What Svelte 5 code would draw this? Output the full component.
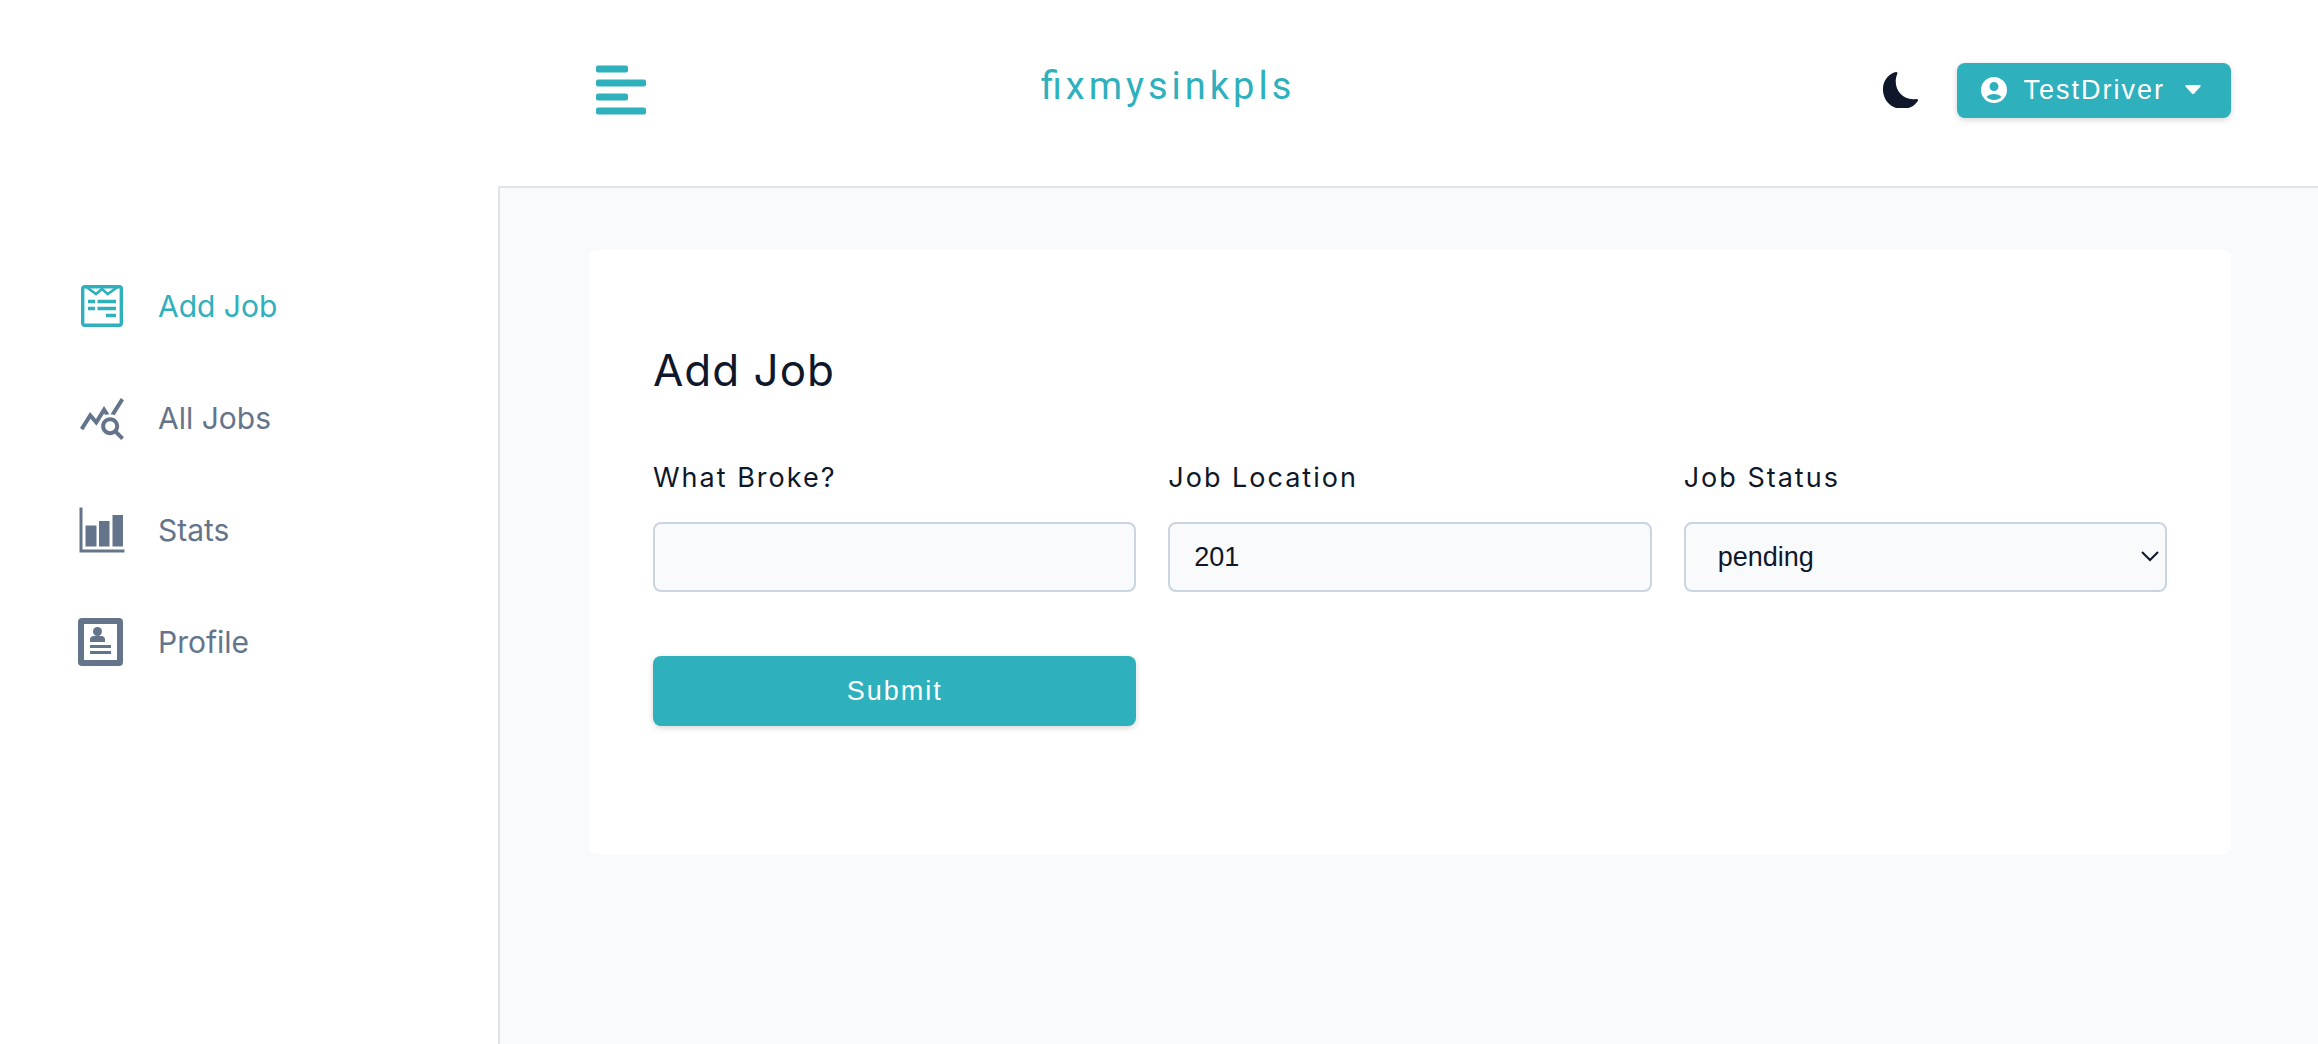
<script>
  const links = [
    { label: 'Add Job', icon: 'form', active: true },
    { label: 'All Jobs', icon: 'query' },
    { label: 'Stats', icon: 'bars' },
    { label: 'Profile', icon: 'profile' }
  ];
  let broke = $state('');
  let location = $state('201');
  let status = $state('pending');
</script>

<div class="layout">
  <aside class="sidebar">
    <nav>
      {#each links as link}
        <a href="#{link.icon}" class:active={link.active}>
          <svg viewBox="0 0 48 48" fill="currentColor" aria-hidden="true">
            {#if link.icon === 'form'}
              <g fill="none" stroke="currentColor" stroke-width="3.4">
                <rect x="4.7" y="4.7" width="38.6" height="38.6" rx="2" />
                <path d="M7 4l11 8 6-5 5.700 5L41 4" stroke-width="2.600" />
                <path d="M10 19.500h7M19.500 19.500H38M10 26.500h7M19.500 26.500H38M28 33.500h10" />
              </g>
            {:else if link.icon === 'query'}
              <path transform="scale(2)" d="M19.88 18.47c.44-.7.7-1.51.7-2.39 0-2.49-2.01-4.5-4.5-4.5s-4.5 2.010-4.500 4.500 2.010 4.500 4.490 4.500c.88 0 1.700-.26 2.390-.7L21.580 23 23 21.580l-3.120-3.110zm-3.800.11a2.500 2.500 0 0 1 0-5 2.500 2.500 0 0 1 0 5zm-.36-8.500c-.74.020-1.450.18-2.100.45l-.55-.83-3.800 6.180-3.010-3.520-3.630 5.810L1 17l5-8 3 3.500L13 6l2.720 4.080zm2.590.5c-.64-.28-1.330-.45-2.050-.49L21.380 2 23 3.180l-4.670 7.400z" />
            {:else if link.icon === 'bars'}
              <path d="M1.500 1.500h3v42h42v3h-45zM7.500 19.500h11v21h-11zM21 15h10.500v25.500H21zM34.500 9H45v31.500H34.500z" />
            {:else}
              <path fill-rule="evenodd" d="M4 0h37a4 4 0 0 1 4 4v40a4 4 0 0 1-4 4H4a4 4 0 0 1-4-4V4a4 4 0 0 1 4-4zM6 6v36h33V6z" />
              <circle cx="19.500" cy="13.500" r="4.500" />
              <path d="M12 24v-2.500q0-3.500 4-3.500h7q4 0 4 3.500V24zM12 27h21v3H12zM12 33h21v3H12z" />
            {/if}
          </svg>
          {link.label}
        </a>
      {/each}
    </nav>
  </aside>

  <div class="page">
    <header>
      <button type="button" class="icon-btn" aria-label="Toggle sidebar">
        <svg width="50" height="50" viewBox="0 0 50 50" fill="currentColor" aria-hidden="true">
          <rect y=".5" width="32" height="7" rx="2" /><rect y="14.5" width="50" height="7" rx="2" />
          <rect y="28.5" width="32" height="7" rx="2" /><rect y="42.5" width="50" height="7" rx="2" />
        </svg>
      </button>
      <span class="brand">fixmysinkpls</span>
      <div class="tools">
        <button type="button" class="icon-btn theme" aria-label="Toggle theme">
          <svg width="36" height="36" viewBox="0 0 36 36" fill="currentColor" aria-hidden="true">
            <path d="M13 0Q15 0 14.200 2C9 15 18 29 33 27Q36 27 34.500 29.500C32 33 29 35 25.500 36H13C-3 31-5 7 11 .5Z" />
          </svg>
        </button>
        <button type="button" class="btn user">
          <svg width="26" height="26" viewBox="0 0 26 26" fill="currentColor" aria-hidden="true">
            <path fill-rule="evenodd" d="M13 0a13 13 0 1 0 0 26 13 13 0 1 0 0-26zM13 5a4.500 4.500 0 1 1 0 9 4.500 4.500 0 1 1 0-9zM5.500 20c3-4 12-4 15 0-4 4-11 4-15 0z" />
          </svg>
          TestDriver
          <svg class="caret" width="16" height="10" viewBox="0 0 16 10" fill="currentColor" aria-hidden="true">
            <path d="M1.500 0h13q2 0 .8 1.800L9.200 8.500q-1.200 1-2.400 0L.7 1.800Q-.5 0 1.500 0z" />
          </svg>
        </button>
      </div>
    </header>

    <main>
      <form onsubmit={(e) => e.preventDefault()}>
        <h1>Add Job</h1>
        <div class="fields">
          <div class="field">
            <label for="broke">What Broke?</label>
            <input id="broke" type="text" bind:value={broke} />
          </div>
          <div class="field">
            <label for="location">Job Location</label>
            <input id="location" type="text" bind:value={location} />
          </div>
          <div class="field">
            <label for="status">Job Status</label>
            <div class="select-wrap">
              <select id="status" bind:value={status}>
                <option>pending</option>
                <option>in progress</option>
                <option>fixed</option>
              </select>
              <svg width="18" height="12" viewBox="0 0 18 12" fill="none" stroke="currentColor" stroke-width="2" aria-hidden="true">
                <path d="M1 1l8 8 8-8" />
              </svg>
            </div>
          </div>
          <button type="submit" class="btn submit">Submit</button>
        </div>
      </form>
    </main>
  </div>
</div>

<style>
  :global(body) {
    margin: 0;
  }
  .layout {
    --teal: #2eb0bd;
    --ink: #0f172a;
    --line: #e1e3e6;
    display: grid;
    grid-template-columns: 498px 1fr;
    min-height: 100vh;
    background: #fff;
    color: var(--ink);
    font-family: Inter, sans-serif;
  }
  .layout *,
  .layout {
    box-sizing: border-box;
  }
  svg {
    display: block;
    flex: none;
  }
  nav {
    display: flex;
    flex-direction: column;
    padding-top: 250px;
  }
  nav a {
    display: flex;
    align-items: center;
    gap: 32px;
    height: 112px;
    padding-left: 78px;
    color: #64748b;
    font-size: 30px;
    text-decoration: none;
  }
  nav a.active {
    color: var(--teal);
  }
  nav svg {
    width: 48px;
    height: 48px;
  }
  .page {
    display: flex;
    flex-direction: column;
  }
  header {
    display: flex;
    align-items: center;
    justify-content: space-between;
    height: 188px;
    padding: 0 87px 6px 91px;
    border-bottom: 2px solid var(--line);
  }
  button {
    border: 0;
    cursor: pointer;
    font-family: "Liberation Sans", sans-serif;
  }
  .icon-btn {
    padding: 0 7px;
    background: none;
    color: var(--teal);
  }
  .icon-btn.theme {
    padding: 0;
    color: var(--ink);
  }
  .brand {
    padding-bottom: 8px;
    color: var(--teal);
    font-family: Roboto, sans-serif;
    font-size: 38px;
    letter-spacing: 4px;
    font-feature-settings: "liga" 1;
  }
  .tools {
    display: flex;
    align-items: center;
    justify-content: flex-end;
    gap: 38px;
    min-width: 548px;
  }
  .btn {
    border-radius: 8px;
    background: var(--teal);
    box-shadow: 0 2px 6px rgb(0 0 0 / 16%);
    color: #fff;
    font-size: 27px;
    letter-spacing: 2px;
  }
  .user {
    display: flex;
    align-items: center;
    gap: 16px;
    height: 55px;
    padding: 0 30px 0 24px;
  }
  .caret {
    margin-left: 4px;
  }
  main {
    flex: 1;
    padding: 62px 87px 62px 89px;
    border-left: 2px solid var(--line);
    background: #f8fafc;
  }
  form {
    padding: 96px 64px 128px;
    border-radius: 8px;
    background: #fff;
  }
  h1 {
    margin: 0 0 64px;
    font-size: 44px;
    font-weight: 400;
    line-height: 48px;
    letter-spacing: 1px;
  }
  .fields {
    display: grid;
    grid-template-columns: repeat(3, 1fr);
    gap: 64px 32px;
  }
  label {
    display: block;
    margin-bottom: 24px;
    font-size: 27px;
    line-height: 40px;
    letter-spacing: 2px;
  }
  input,
  select {
    display: block;
    width: 100%;
    height: 70px;
    padding: 0 24px;
    border: 2px solid #cbd5e1;
    border-radius: 8px;
    background: #f8fafc;
    color: var(--ink);
    font-family: "Liberation Sans", sans-serif;
    font-size: 27px;
  }
  select {
    appearance: none;
    padding: 0 32px;
  }
  .select-wrap {
    display: grid;
    align-items: center;
  }
  .select-wrap > * {
    grid-area: 1 / 1;
  }
  .select-wrap svg {
    justify-self: end;
    margin-right: 8px;
    pointer-events: none;
  }
  .submit {
    height: 70px;
  }
</style>
